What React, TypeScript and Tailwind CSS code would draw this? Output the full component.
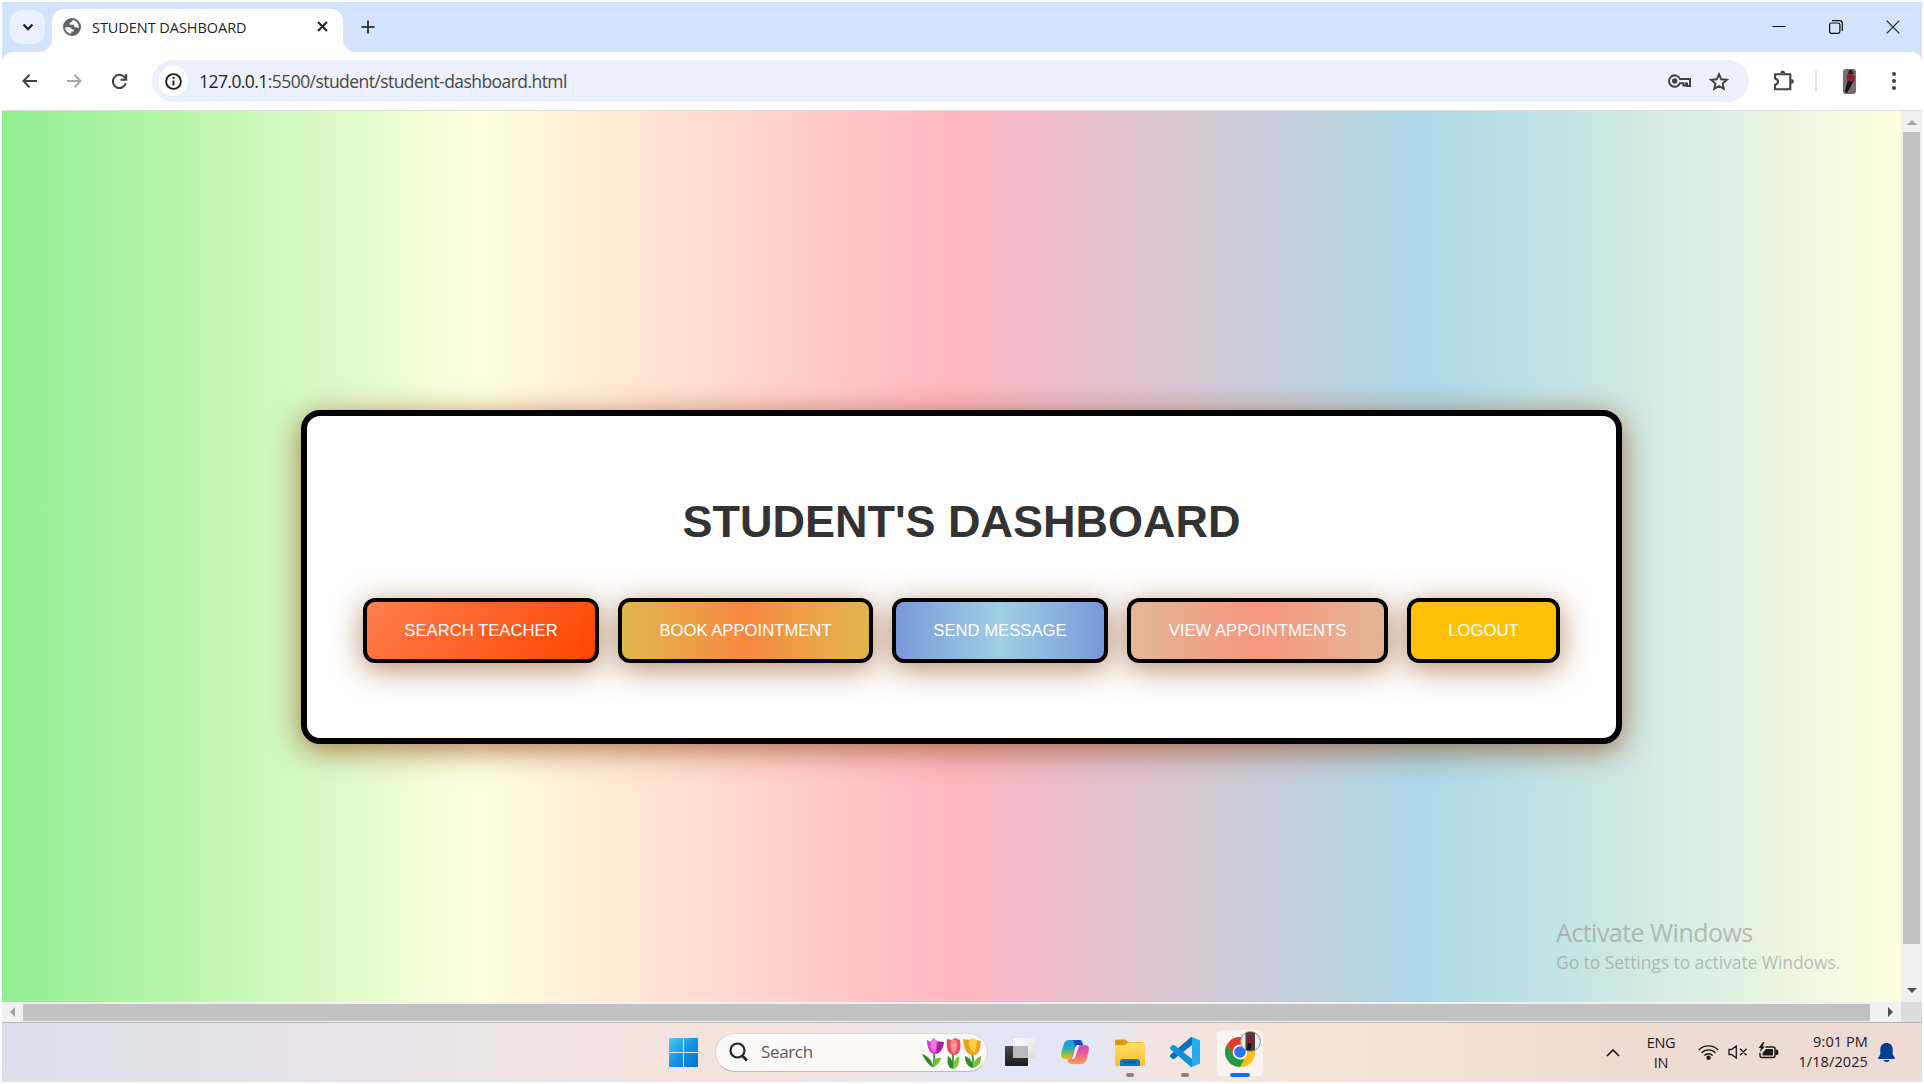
import React from 'react';

const ui = "font-['Open_Sans','Noto_Sans',sans-serif]";

function TabStrip() {
  return (
    <div className="flex h-[50px] shrink-0 items-start bg-[#d3e2fd]">
      <div className="ml-2 mt-2 flex h-[34px] w-[35px] items-center justify-center rounded-xl bg-[#ebf2ff]">
        <svg width="12" height="8" viewBox="0 0 12 8" fill="none" stroke="#1f1f1f" strokeWidth="2.3">
          <path d="M1.5 1.5L6 6l4.500-4.500" />
        </svg>
      </div>
      <div className="relative ml-[7px] mt-[7px] flex h-[43px] w-[291px] items-center rounded-t-xl bg-white pb-[8px]">
        <svg className="absolute -left-[13px] bottom-0" width="13" height="13" viewBox="0 0 13 13">
          <path d="M0 13A13 13 0 0 0 13 0V13Z" fill="#fff" />
        </svg>
        <svg className="absolute -right-[13px] bottom-0" width="13" height="13" viewBox="0 0 13 13">
          <path d="M13 13A13 13 0 0 1 0 0V13Z" fill="#fff" />
        </svg>
        <svg className="ml-[11px] shrink-0" width="18" height="18" viewBox="0 0 18 18">
          <circle cx="9" cy="9" r="9" fill="#5f6368" />
          <path d="M2 9.200h4.200c1.700 0 2.500 1 2.500 2.300h2v2H8.200v2.300A7 7 0 0 1 2 9.200Z" fill="#fff" />
          <path d="M9.500 2c-.2 1.900-1.200 2.500-2.700 2.700v2.100h4.400v2.400h2c1 0 1.300 1 2.700.6.300-3.800-2.500-7.400-6.400-7.800Z" fill="#fff" />
        </svg>
        <span className="ml-[11px] w-[154px] whitespace-nowrap pt-[2px] text-[14.500px] leading-5 tracking-[-0.05px] text-[#1f1f1f]">STUDENT DASHBOARD</span>
        <svg className="ml-[71px] shrink-0" width="11" height="11" viewBox="0 0 11 11" stroke="#1f1f1f" strokeWidth="2">
          <path d="M1 1l9 9M10 1l-9 9" />
        </svg>
      </div>
      <svg className="ml-[18px] mt-[18px]" width="14" height="14" viewBox="0 0 14 14" stroke="#3c3c3c" strokeWidth="2">
        <path d="M7 .5v13M.5 7h13" />
      </svg>
      <div className="ml-auto mr-[22px] mt-[18px] flex h-[14px]">
        <svg className="mr-[43px]" width="14" height="14" viewBox="0 0 14 14" stroke="#111">
          <path d="M.5 6.500h13" />
        </svg>
        <svg className="mr-[43px]" width="14" height="14" viewBox="0 0 14 14" fill="none" stroke="#111" strokeWidth="1.200">
          <rect x=".6" y="3" width="10.300" height="10.300" rx="1.700" />
          <path d="M3 .7h7.500A2.800 2.800 0 0 1 13.300 3.500V11" />
        </svg>
        <svg width="14" height="14" viewBox="0 0 14 14" stroke="#222" strokeWidth="1.200">
          <path d="M.7.700l12.600 12.600M13.300.700L.7 13.300" />
        </svg>
      </div>
    </div>
  );
}

function Toolbar() {
  return (
    <div className="h-[59px] shrink-0 bg-[#d3e2fd]">
      <div className="flex h-[59px] items-center rounded-t-[10px] border-b border-[#dcdcdc] bg-white">
        <svg className="ml-[20px]" width="15" height="14" viewBox="0 0 15 14" fill="none" stroke="#3f4144" strokeWidth="2">
          <path d="M15 7H1.500M7.500 .8L1.500 7l6 6.200" />
        </svg>
        <svg className="ml-[30px]" width="15" height="14" viewBox="0 0 15 14" fill="none" stroke="#a6a7a9" strokeWidth="2">
          <path d="M0 7h13.500M7.500 .8l6 6.200-6 6.200" />
        </svg>
        <svg className="ml-[29px]" width="17" height="17" viewBox="0 0 17 17" fill="none" stroke="#3f4144" strokeWidth="2">
          <path d="M14.800 10.300A6.600 6.600 0 1 1 13.400 4l1.600 2" />
          <path d="M15.200 1v5.700H9.500" />
        </svg>
        <div className="ml-[24px] flex h-[42px] w-[1597px] items-center rounded-full bg-[#ebf0fa]">
          <div className="ml-[6px] flex h-[30px] w-[30px] items-center justify-center rounded-full bg-white">
            <svg width="17" height="17" viewBox="0 0 17 17" fill="none" stroke="#1f1f1f" strokeWidth="1.900">
              <circle cx="8.500" cy="8.500" r="7.400" />
              <path d="M8.500 7.500v5M8.500 4v2" />
            </svg>
          </div>
          <span className="ml-[11px] whitespace-nowrap text-[17.500px] leading-6 tracking-[-0.56px] text-[#474747]">
            <span className="text-[#1f1f1f]">127.0.0.1</span>:5500/student/student-dashboard.html
          </span>
          <svg className="ml-auto" width="23" height="14" viewBox="0 0 23 14" fill="none" stroke="#3f4144" strokeWidth="2">
            <path d="M12 5A5.700 5.700 0 1 0 12 9.200h3.500v2.300h2.500V9.500h1v2.500h3V5Z" />
            <circle cx="6.700" cy="7" r="1.700" fill="#3f4144" />
          </svg>
          <svg className="ml-[18px] mr-[20px]" width="20" height="19" viewBox="0 0 20 19" fill="none" stroke="#3f4144" strokeWidth="1.900">
            <path d="M10 2.200l2.200 5.100 5.600.5-4.200 3.700 1.200 5.400L10 14l-4.800 2.900 1.200-5.400L2.200 7.800l5.600-.5Z" />
          </svg>
        </div>
        <svg className="ml-[24px] -mt-[2px]" width="21" height="21" viewBox="0 0 21 21" fill="none" stroke="#3f4144" strokeWidth="2.100">
          <path d="M2 4.200h15.300v15H2v-4.400c4-1 4-5.200 0-6.200Z" strokeLinejoin="round" />
          <path d="M7.200 3.200a2.500 2.500 0 0 1 5 0ZM18.300 9a2.500 2.500 0 0 1 0 5Z" fill="#3f4144" stroke="none" />
        </svg>
        <div className="ml-[21px] h-5 w-[2px] bg-[#d3e2fd]" />
        <svg className="ml-[26px] rounded-[3px]" width="13" height="25" viewBox="0 0 13 25">
          <rect width="13" height="25" fill="#776c6f" />
          <path d="M6 1h3l1 3-2 2-3-1Z" fill="#211b1c" />
          <path d="M4 6l4-1 4 2-1 6-5 2-2-3Z" fill="#8f1d2c" />
          <path d="M5 12l5 1-3 6-3 5-2-1 1-6Z" fill="#17171b" />
          <path d="M8 4l3-1-1 3Z" fill="#3a2024" />
        </svg>
        <div className="ml-[36px] flex flex-col gap-[3px]">
          <i className="h-1 w-1 rounded-full bg-[#3f4144]" />
          <i className="h-1 w-1 rounded-full bg-[#3f4144]" />
          <i className="h-1 w-1 rounded-full bg-[#3f4144]" />
        </div>
      </div>
    </div>
  );
}

const actions = [
  { label: 'SEARCH TEACHER', look: 'w-[236px] bg-[linear-gradient(135deg,#ff7f50,#ff4500)]' },
  { label: 'BOOK APPOINTMENT', look: 'w-[255px] bg-[linear-gradient(90deg,#e3b74e,#f6893f,#e3b74e)]' },
  { label: 'SEND MESSAGE', look: 'w-[216px] bg-[linear-gradient(90deg,#7a99da,#a0cfe3,#7a99da)]' },
  { label: 'VIEW APPOINTMENTS', look: 'w-[261px] bg-[linear-gradient(90deg,#e3b698,#f6967e,#e3b698)]' },
  { label: 'LOGOUT', look: 'w-[153px] bg-[#ffc107]' },
];

function Dashboard() {
  return (
    <div className="relative flex h-[891px] w-[1899px] items-start justify-center bg-[linear-gradient(90deg,#90ee90,#ffffe0,#ffb6c1,#add8e6,#ffffe0)] pt-[299px] font-['Liberation_Sans',Arial,sans-serif]">
      <div className="mr-[-20px] flex h-[334px] w-[1321px] flex-col items-center rounded-[19px] border-[6px] border-black bg-white shadow-[0_6px_30px_rgba(139,69,19,0.7)]">
        <h1 className="mt-[80px] whitespace-nowrap text-[45px] font-bold leading-[52px] text-[#333]">STUDENT'S DASHBOARD</h1>
        <div className="mt-[50px] flex gap-[19px]">
          {actions.map((a) => (
            <button key={a.label} className={`${a.look} h-[65px] whitespace-nowrap rounded-[12px] border-4 border-black bg-origin-padding pt-px text-[16.670px] leading-5 text-white shadow-[0_6px_30px_rgba(139,69,19,0.62)]`}>
              {a.label}
            </button>
          ))}
        </div>
      </div>
      <div className={`${ui} absolute left-[1554px] top-[805px] whitespace-nowrap text-[#8a8a8a]/55`}>
        <div className="text-[25px] leading-[32px] tracking-[-0.53px]">Activate Windows</div>
        <div className="text-[17.500px] leading-[28px] tracking-[-0.07px]">Go to Settings to activate Windows.</div>
      </div>
    </div>
  );
}

function VerticalScrollbar() {
  return (
    <div className="flex w-[21px] flex-col items-center bg-[#f0f0f0]">
      <svg className="mt-[9px]" width="10" height="5" viewBox="0 0 10 5"><path d="M5 0l5 5H0Z" fill="#a3a3a3" /></svg>
      <div className="mt-[7px] h-[812px] w-[17px] bg-[#c1c1c1]" />
      <svg className="mt-[44px]" width="10" height="5" viewBox="0 0 10 5"><path d="M0 0h10L5 5Z" fill="#505050" /></svg>
    </div>
  );
}

function HorizontalScrollbar() {
  return (
    <div className="flex h-5 items-center bg-[#f0f0f0]">
      <svg className="ml-[8px]" width="5" height="10" viewBox="0 0 5 10"><path d="M5 0v10L0 5Z" fill="#a3a3a3" /></svg>
      <div className="ml-[8px] h-[17px] w-[1847px] bg-[#c1c1c1]" />
      <svg className="ml-[18px]" width="5" height="10" viewBox="0 0 5 10"><path d="M0 0v10l5-5Z" fill="#505050" /></svg>
      <div className="ml-auto h-5 w-[21px] bg-[#dcdcdc]" />
    </div>
  );
}

function Tulips() {
  return (
    <svg width="60" height="32" viewBox="0 0 60 32">
      <path d="M12 15q1 8-1 14" stroke="#3f9a2e" strokeWidth="2" fill="none" />
      <path d="M11 29C7 28 3 22 0 16c6 2 10 6 11 13Z" fill="#2f8c2b" />
      <path d="M11 29c0-6 3-10 8-9-1 4-4 8-8 9Z" fill="#76bd3a" />
      <path d="M5 2l4 2 2-4 4 3 7 1c-1 6-3 12-9 12C8 16 5 10 5 2Z" fill="#d63bc3" />
      <path d="M9 4l2-4 4 3-2 12C9 12 8 8 9 4Z" fill="#f07ade" />
      <path d="M16 4l6 0c-1 5-3 10-8 12Z" fill="#a81fa0" />
      <path d="M31 15v15" stroke="#4ea436" strokeWidth="2" />
      <path d="M31 31c-6-1-6-8-5-13 4 3 6 7 5 13Z" fill="#2f8c2b" />
      <path d="M31 31c0-6 2-11 6-13 1 7-1 12-6 13Z" fill="#82c63d" />
      <path d="M25 1l5 1 3-2 5 2c1 6 1 15-6 15s-8-9-7-16Z" fill="#e84f5c" />
      <path d="M29 3c3-3 6-1 6 3s-1 8-3 10c-3-3-4-8-3-13Z" fill="#ff8f92" />
      <path d="M50 15q2 7 0 14" stroke="#4ea436" strokeWidth="2" fill="none" />
      <path d="M51 30c-5-1-8-5-8-12 5 2 8 6 8 12Z" fill="#2f8c2b" />
      <path d="M51 30c0-6 3-10 8-12 1 6-3 11-8 12Z" fill="#76bd3a" />
      <path d="M41 1l6 1 4-2 3 2 5 1c-1 7-1 14-8 14S42 10 41 1Z" fill="#eaa318" />
      <path d="M47 3l4-3 4 3-2 12c-5-2-6-7-6-12Z" fill="#ffcf45" />
    </svg>
  );
}

function TaskbarIcons() {
  return (
    <>
      <svg className="ml-[16px] -mt-px" width="30" height="28" viewBox="0 0 30 28">
        <defs>
          <linearGradient id="tvDark" x2="0" y2="1"><stop stopColor="#4a4a4a" /><stop offset="1" stopColor="#1d1d1d" /></linearGradient>
          <linearGradient id="tvLight" x2="1" y2="1"><stop stopColor="#fff" /><stop offset="1" stopColor="#dcdcdc" /></linearGradient>
        </defs>
        <rect y="8" width="23" height="20" rx="1" fill="url(#tvDark)" />
        <rect x="8" y="0" width="22" height="20" rx="1" fill="url(#tvLight)" />
        <path d="M8 8h15v12H8Z" fill="#bababa" />
      </svg>
      <svg className="ml-[26px] -mt-[2px]" width="28" height="26" viewBox="0 0 28 26">
        <defs>
          <linearGradient id="cpA" x2="0" y2="1"><stop stopColor="#2191e4" /><stop offset=".45" stopColor="#25a9c4" /><stop offset=".7" stopColor="#7dbe49" /><stop offset="1" stopColor="#f3bd19" /></linearGradient>
          <linearGradient id="cpB" x2="0" y2="1"><stop stopColor="#a94ee8" /><stop offset=".5" stopColor="#e9549f" /><stop offset="1" stopColor="#ff9a51" /></linearGradient>
        </defs>
        <path d="M14 1h4c2 0 3 2 3.500 5H24c4 0 4.500 3 3.500 7l-2 7c-1 4-3 5-6 5h-9c-2 0-3-1-4-4l7-15Z" fill="url(#cpB)" />
        <path d="M9 1h9c2 0 3 1 4 5h-5c-2 0-3 2-4 5l-2 6c-1 2-2 3-4 3H4c-4 0-4.500-3-3.500-7l2-7C3.500 2 6 1 9 1Z" fill="url(#cpA)" />
        <path d="M14 1h4c2 0 3 1 4 5h-5c-1.500 0-2.500 1-3 3 0-3 0-6-2-8Z" fill="#1b48bd" />
        <path d="M14.500 8c.5-1.500 1.500-2 3-2h1l-4 11c-.5 2-1.500 3-3 3h-1.500c1 0 1.500-1 2-3Z" fill="#f5eff8" />
      </svg>
      <div className="relative ml-[26px] flex h-[60px] w-[30px] items-center">
        <svg width="30" height="28" viewBox="0 0 30 28">
          <defs><linearGradient id="fold" x2="0" y2="1"><stop stopColor="#ffdf68" /><stop offset="1" stopColor="#fbc02d" /></linearGradient></defs>
          <path d="M0 2q0-1.500 1.500-1.500H10L13 3h15v6H0Z" fill="#d99a06" />
          <path d="M0 6h10l3-2.500h15.500Q30 3.500 30 5v20q0 2-2 2H2q-2 0-2-2Z" fill="url(#fold)" />
          <path d="M5 27v-4q0-3 3-3h14q3 0 3 3v4Z" fill="#1178c9" />
          <path d="M9 23.500h12" stroke="#074b93" strokeWidth="1.300" />
        </svg>
        <i className="absolute bottom-[6px] left-[11px] h-1 w-2 rounded-full bg-[#8b8380]" />
      </div>
      <div className="relative ml-[25px] flex h-[60px] w-[30px] items-center">
        <svg className="-mt-px" width="30" height="30" viewBox="0 0 30 30">
          <path d="M22 0L30 3.500v23L22 30Z" fill="#27a9f2" />
          <path d="M22 0v8L4.500 21.700c-.8.600-1.600.5-2.200 0L.5 20c-.7-.7-.7-1.500 0-2.200L20.500.6C21 0 21.600-.1 22 0Z" fill="#0871b9" />
          <path d="M22 30v-8L4.500 8.300c-.8-.6-1.600-.5-2.200 0L.5 10c-.7.700-.7 1.500 0 2.200l20 17.200c.5.500 1 .7 1.500.6Z" fill="#1190d8" />
        </svg>
        <i className="absolute bottom-[6px] left-[11px] h-1 w-2 rounded-full bg-[#8b8380]" />
      </div>
      <div className="relative ml-[16px] flex h-12 w-12 items-center justify-center rounded-md border border-[#f2e8e3] bg-[#fbf3ef]">
        <svg className="-mt-px" width="30" height="30" viewBox="0 0 30 30">
          <circle cx="15" cy="15" r="15" fill="#fbc116" />
          <path d="M2 7.500A15 15 0 0 1 28 7.500H15L8.500 18.700Z" fill="#e33b2e" />
          <path d="M2 7.500L8.500 18.700 15 22.500h6.500L15 30A15 15 0 0 1 2 7.500Z" fill="#229a48" />
          <path d="M21.500 18.800L15 30A15 15 0 0 0 28 7.500H15Z" fill="#fbc116" />
          <circle cx="15" cy="15" r="7.300" fill="#fff" />
          <circle cx="15" cy="15" r="5.800" fill="#2a76eb" />
        </svg>
        <svg className="absolute left-[23px] top-[1px]" width="21" height="21" viewBox="0 0 21 21">
          <circle cx="10.500" cy="10.500" r="9.900" fill="#efebea" stroke="#8d8787" strokeWidth="1" />
          <path d="M5.500 2Q10 0 15 2v17q-5 2-9.500 0Z" fill="#4a3e40" />
          <path d="M9 4h3l1 7-3 2-2-4Z" fill="#8d1620" />
          <path d="M8 12l4 1-2 6H7Z" fill="#141215" />
        </svg>
        <i className="absolute bottom-[-1px] left-[13px] h-1 w-5 rounded-full bg-[#0f74d4]" />
      </div>
    </>
  );
}

function Taskbar() {
  return (
    <div className={`${ui} flex h-[60px] items-center border-t border-[#b5b3b8] bg-[linear-gradient(90deg,#dcdfec_0px,#e2e1e9_180px,#e9e4e8_400px,#f3e3df_640px,#f5e2da_760px,#ece6ea_900px,#e1e7f5_1000px,#e4e6f2_1090px,#f3e4e1_1160px,#f6e3d8_1290px,#f3dfd6_1480px,#efdad4_1650px,#eedbd4_1920px)]`}>
      <svg className="ml-[667px] -mt-px" width="29" height="29" viewBox="0 0 29 29">
        <defs><linearGradient id="win" x1="0" y1="0" x2="29" y2="29" gradientUnits="userSpaceOnUse"><stop stopColor="#4dcbf9" /><stop offset=".5" stopColor="#1593e2" /><stop offset="1" stopColor="#0470cd" /></linearGradient></defs>
        <path d="M1 0h13v14H0V1Q0 0 1 0ZM15 0h13q1 0 1 1v13H15ZM0 15h14v14H1q-1 0-1-1ZM15 15h14v13q0 1-1 1H15Z" fill="url(#win)" />
      </svg>
      <div className="-mt-px ml-[17px] mr-px flex h-[39px] w-[273px] items-center rounded-full border border-[#dfd6d4] border-b-[#bfb8b8] bg-[#fbf8f8]">
        <svg className="ml-[13px]" width="19" height="20" viewBox="0 0 19 20" fill="none" stroke="#242424" strokeWidth="2.200">
          <circle cx="8.500" cy="8.500" r="7" />
          <path d="M13 13.500l5 5" strokeWidth="2.600" />
        </svg>
        <span className="ml-[13px] text-[17px] leading-6 tracking-[-0.35px] text-[#5c5a5a]">Search</span>
        <div className="ml-auto mr-[5px] pt-[4px]"><Tulips /></div>
      </div>
      <TaskbarIcons />
      <div className="ml-auto mr-[26px] flex items-center text-[#1b1b1b]">
        <svg width="14" height="8" viewBox="0 0 14 8" fill="none" stroke="#1b1b1b" strokeWidth="1.700"><path d="M1 7l6-6 6 6" /></svg>
        <div className="ml-[26px] w-[30px] text-center text-[14.500px] leading-5 tracking-[-0.3px]">ENG<br />IN</div>
        <svg className="ml-[22px] -mt-[2px]" width="21" height="16" viewBox="0 0 21 16" fill="none" stroke="#1b1b1b" strokeWidth="1.400">
          <path d="M.7 6a13.600 13.600 0 0 1 19.600 0M3.500 8.800a9.800 9.800 0 0 1 14 0M6.300 11.500a5.900 5.900 0 0 1 8.400 0" />
          <circle cx="10.500" cy="13.700" r="1.500" fill="#1b1b1b" />
        </svg>
        <svg className="ml-[9px] -mt-px" width="20" height="14" viewBox="0 0 20 14" fill="none" stroke="#1b1b1b" strokeWidth="1.300">
          <path d="M1 4.500h2.500L8.300 1v12L3.500 9.500H1ZM12 3.800l6.500 6.500M18.500 3.800L12 10.300" />
        </svg>
        <svg className="ml-[10px] -mt-[4px]" width="21" height="17" viewBox="0 0 21 17">
          <path d="M7.500 5H15q2 0 2 2v6.500q0 2-2 2H4q-2 0-2-2V11" fill="none" stroke="#1b1b1b" strokeWidth="1.500" />
          <path d="M8 7h7v6.500H4.500V11Z" fill="#1b1b1b" />
          <path d="M17.500 7.500h1q1.800 0 1.800 1.500v2.500q0 1.500-1.800 1.500h-1Z" fill="#1b1b1b" />
          <path d="M5 0L.5 6H3l-1.500 4.500L7 4.500H4.500L6.500 0Z" fill="#1b1b1b" />
        </svg>
        <div className="-mt-[2px] ml-[17px] w-[72px] whitespace-nowrap text-right text-[14.500px] leading-5 tracking-[0.1px]">9:01 PM<br />1/18/2025</div>
        <svg className="ml-[10px] mr-px" width="17" height="20" viewBox="0 0 17 20" fill="#003e92">
          <path d="M8.500 0C4.800 0 2.300 2.600 2.300 6.500v5L.4 14.500c-.5.900 0 1.500.9 1.500h14.400c.9 0 1.400-.6.900-1.500l-1.900-3v-5C14.700 2.600 12.200 0 8.500 0ZM5.500 17h6c-.3 1.300-1.400 2-3 2s-2.700-.7-3-2Z" />
        </svg>
      </div>
    </div>
  );
}

export default function App() {
  return (
    <div className="h-[1084px] w-[1924px] overflow-hidden bg-white p-[2px]">
      <div className={`${ui} flex h-[1080px] w-[1920px] flex-col overflow-hidden`}>
        <TabStrip />
        <Toolbar />
        <div className="flex h-[891px] shrink-0 overflow-hidden">
          <Dashboard />
          <VerticalScrollbar />
        </div>
        <HorizontalScrollbar />
        <Taskbar />
      </div>
    </div>
  );
}
